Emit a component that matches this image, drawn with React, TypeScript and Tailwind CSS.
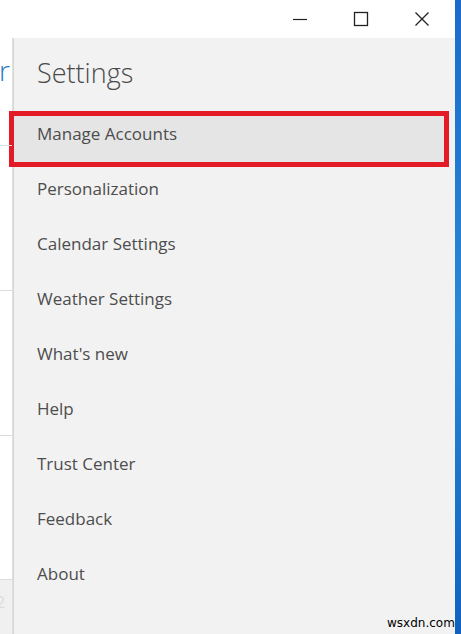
import React from "react";

const items = [
  "Manage Accounts",
  "Personalization",
  "Calendar Settings",
  "Weather Settings",
  "What's new",
  "Help",
  "Trust Center",
  "Feedback",
  "About",
];

export default function App() {
  return (
    <div
      className="relative flex h-[634px] w-[461px] overflow-hidden bg-white"
      style={{ fontFamily: '"Open Sans", "Noto Sans", sans-serif' }}
    >
      {/* red annotation box (behind the menu text) */}
      <div className="absolute left-[9px] top-[111px] h-[56px] w-[440px] border-[5px] border-[#e21b26] bg-[#e5e5e5]" />

      <div className="flex flex-1 flex-col">
        {/* title bar */}
        <div className="flex h-[38px] shrink-0 items-center justify-end pr-[3px] text-[#222]">
          <div className="flex h-full w-[61px] items-center justify-center">
            <svg width="16" height="16" viewBox="0 0 16 16">
              <path d="M1 8.5h14" stroke="#222" strokeWidth="1.2" />
            </svg>
          </div>
          <div className="flex h-full w-[61px] items-center justify-center">
            <svg width="16" height="16" viewBox="0 0 16 16">
              <rect x="1.5" y="1.5" width="13" height="13" fill="none" stroke="#222" strokeWidth="1.3" />
            </svg>
          </div>
          <div className="flex h-full w-[61px] items-center justify-center">
            <svg width="16" height="16" viewBox="0 0 16 16">
              <path d="M1.5 1.5l13 13M14.5 1.5l-13 13" stroke="#222" strokeWidth="1.3" />
            </svg>
          </div>
        </div>
        <div className="flex flex-1">
          {/* underlying app strip */}
          <div className="relative flex w-[12px] shrink-0 flex-col">
            <div className="h-[108px] border-b border-[#dcdcdc]">
              <div className="ml-[-1px] mt-[18px] text-[28px] leading-[28px] font-light text-[#2a78c2]">r</div>
            </div>
            <div className="h-[145px] border-b border-[#dcdcdc]" />
            <div className="h-[145px] border-b border-[#dcdcdc]" />
            <div className="h-[144px] border-b border-[#dcdcdc]" />
            <div className="flex-1 bg-[#f0f0f0]">
              <div className="ml-[-4px] mt-[10px] text-[16px] text-[#dcdcdc]">2</div>
            </div>
          </div>
          <div className="w-[2px] shrink-0 bg-gradient-to-r from-[#e2e2e2] to-[#d4d4d4]" />
          {/* settings panel */}
          <div className="flex flex-1 flex-col bg-[#f2f2f2]">
            <div className="flex h-[68px] shrink-0 items-center pl-[23px] pt-[2px] text-[27px] font-light text-[#4a4a4a]">
              Settings
            </div>
            {items.map((t) => (
              <div
                key={t}
                className="relative z-10 flex h-[55px] shrink-0 items-center pl-[23px] text-[17px] text-[#4d4d4d]"
              >
                {t}
              </div>
            ))}
          </div>
        </div>
      </div>
      {/* blue strip */}
      <div className="w-[6px] shrink-0 bg-gradient-to-b from-[#1a6cc8] via-[#2a88d8] to-[#0f62be]" />

      {/* watermark */}
      <div
        className="absolute left-[387px] top-[616px] z-20 text-[12px] leading-[14px] text-black"
        style={{ fontFamily: '"DejaVu Sans", sans-serif' }}
      >
        wsxdn.com
      </div>
    </div>
  );
}
